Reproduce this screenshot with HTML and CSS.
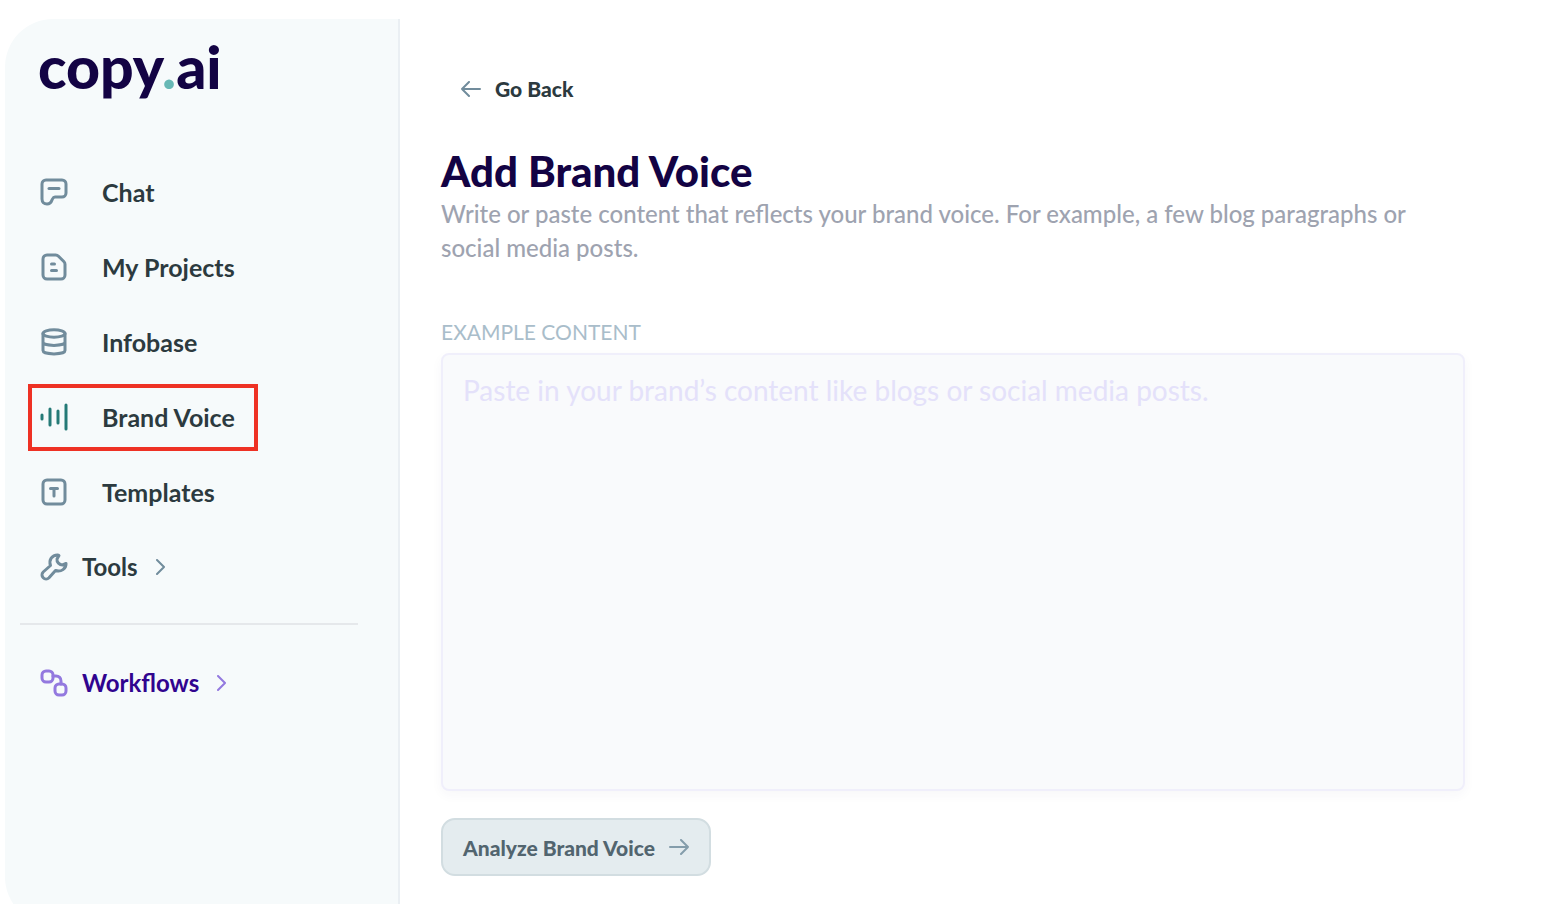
FILE: index.html
```html
<!DOCTYPE html>
<html lang="en">
<head>
  <meta charset="UTF-8">
  <meta name="viewport" content="width=device-width, initial-scale=1.0">
  <title>Add Brand Voice | copy.ai</title>
  <link rel="stylesheet" href="styles.css">
</head>
<body>
  <aside class="sidebar">
    <a class="logo" href="#">copy<span class="logo-dot">.</span>ai</a>

    <nav>
      <a class="nav-item" href="#">
        <svg class="icon" viewBox="0 0 28 28"><path d="M6 2h16a4 4 0 0 1 4 4v9a4 4 0 0 1-4 4h-7c-2 0-2 1-3 3-1 3-2.500 4-5 4-3 0-5-2-5-5V6a4 4 0 0 1 4-4z"/><path d="M9 10.500h10"/></svg>
        <span>Chat</span>
      </a>
      <a class="nav-item" href="#">
        <svg class="icon" viewBox="0 0 28 28"><path d="M7 2h8.500a4 4 0 0 1 3 1.200L23.800 8.500a4 4 0 0 1 1.200 3V22a4 4 0 0 1-4 4H7a4 4 0 0 1-4-4V6a4 4 0 0 1 4-4z"/><path d="M11.500 11h3M11.500 17.500h5"/></svg>
        <span>My Projects</span>
      </a>
      <a class="nav-item" href="#">
        <svg class="icon" viewBox="0 0 28 28"><ellipse cx="14" cy="5.500" rx="11" ry="3.700"/><path d="M3 5.500v17c0 4.500 22 4.500 22 0v-17M3 14c0 4.500 22 4.500 22 0"/></svg>
        <span>Infobase</span>
      </a>
      <a class="nav-item active" href="#">
        <svg class="icon" viewBox="0 0 28 28"><path d="M2 12v4M10 6v16M18 8v12M26 2v24"/></svg>
        <span>Brand Voice</span>
      </a>
      <a class="nav-item" href="#">
        <svg class="icon" viewBox="0 0 28 28"><rect x="3" y="2" width="22" height="24" rx="4"/><path d="M10.500 10.500h7M14 10.500v7.500"/></svg>
        <span>Templates</span>
      </a>
      <a class="nav-item group" href="#">
        <svg class="icon" viewBox="0 0 28 28"><path d="M17.500 2C12 2 8.500 7 10.500 12.500L3.200 19a4 4 0 0 0 5.800 5.800L15.500 17.500C21 19.500 26.500 15.500 26 10.500L22.500 12C19.500 12 16.500 9 17 6L19 2.500z"/></svg>
        <span>Tools</span>
        <svg class="chevron" viewBox="0 0 10 16"><path d="M1 1l7 7-7 7"/></svg>
      </a>
    </nav>

    <hr>

    <nav>
      <a class="nav-item group workflows" href="#">
        <svg class="icon" viewBox="0 0 28 28"><rect x="2" y="2" width="11" height="11" rx="4"/><rect x="15" y="15" width="11" height="11" rx="4"/><path d="M13 7h3c3 0 5 2 5 5v3"/></svg>
        <span>Workflows</span>
        <svg class="chevron" viewBox="0 0 10 16"><path d="M1 1l7 7-7 7"/></svg>
      </a>
    </nav>
  </aside>

  <main>
    <a class="back" href="#">
      <svg class="arrow" viewBox="0 0 20 16"><path d="M19 8H1M8 1L1 8l7 7"/></svg>
      Go Back
    </a>

    <h1>Add Brand Voice</h1>
    <p class="intro">Write or paste content that reflects your brand voice. For example, a few blog paragraphs or social media posts.</p>

    <form>
      <label for="content">EXAMPLE CONTENT</label>
      <textarea id="content" placeholder="Paste in your brand’s content like blogs or social media posts."></textarea>
      <button type="submit">
        Analyze Brand Voice
        <svg class="arrow" viewBox="0 0 20 16"><path d="M1 8h18M12 1l7 7-7 7"/></svg>
      </button>
    </form>
  </main>
</body>
</html>
```
FILE: styles.css
```css
:root {
  --sidebar-bg: #f6fafb;
  --navy: #130344;
  --text: #2c3a3f;
  --slate: #718c9c;
  --muted: #9ea3b0;
  --teal: #247a77;
  --purple: #9379df;
}

* {
  margin: 0;
  padding: 0;
  box-sizing: border-box;
}

body {
  font-family: Lato, 'Liberation Sans', sans-serif;
  background: #fff;
  color: var(--text);
  height: 100vh;
  display: flex;
  align-items: flex-start;
  overflow: hidden;
}

a {
  color: inherit;
  text-decoration: none;
}

svg {
  flex: none;
  fill: none;
  stroke: var(--slate);
  stroke-linecap: round;
  stroke-linejoin: round;
}

.sidebar {
  flex: none;
  width: 395px;
  height: calc(100vh + 2px);
  margin: 19px 0 0 5px;
  background: var(--sidebar-bg);
  border-right: 2px solid #eaeff3;
  border-radius: 48px 0 0 48px;
}

.logo {
  display: block;
  height: 140px;
  padding: 16px 0 0 33px;
  font-size: 59px;
  line-height: 64px;
  font-weight: 900;
  color: var(--navy);
}

.logo-dot {
  color: #67b8b5;
}

.nav-item {
  display: flex;
  align-items: center;
  gap: 34px;
  width: 230px;
  height: 67px;
  margin: 0 0 8px 23px;
  padding: 0 8px 2px;
  border: 4px solid transparent;
  font-size: 25px;
  font-weight: 700;
}

.nav-item.active {
  border-color: #ee3124;
}

.nav-item.active .icon {
  stroke: var(--teal);
}

.nav-item.group {
  gap: 14px;
  font-size: 24px;
}

.icon {
  width: 28px;
  height: 28px;
  stroke-width: 3;
}

.chevron {
  width: 10px;
  height: 16px;
  margin-left: 4px;
  stroke-width: 2;
}

hr {
  margin: 22px 40px 25px 15px;
  border: 0;
  border-top: 2px solid #e5e8eb;
}

.workflows {
  color: #30048f;
}

.workflows svg {
  stroke: var(--purple);
}

main {
  flex: 1;
  padding: 72px 85px 0 41px;
}

.back {
  display: flex;
  align-items: center;
  gap: 14px;
  margin-left: 20px;
  font-size: 21px;
  line-height: 34px;
  font-weight: 900;
}

.arrow {
  width: 20px;
  height: 16px;
  stroke-width: 2;
}

h1 {
  margin-top: 39px;
  font-size: 42px;
  line-height: 52px;
  font-weight: 900;
  color: var(--navy);
}

.intro {
  font-size: 24px;
  line-height: 34px;
  font-weight: 500;
  color: var(--muted);
}

label {
  display: block;
  margin-top: 53px;
  font-size: 21px;
  line-height: 28px;
  color: #a9bdca;
}

textarea {
  display: block;
  width: 100%;
  height: 438px;
  margin-top: 7px;
  padding: 18px 20px;
  border: 2px solid #f0effb;
  border-radius: 8px;
  background: #f9fafc;
  box-shadow: 0 4px 12px rgba(40, 60, 90, 0.04);
  font-family: inherit;
  font-size: 28px;
  line-height: 34px;
  color: var(--text);
  resize: none;
}

textarea::placeholder {
  color: #e4e1fa;
}

button {
  display: flex;
  align-items: center;
  gap: 14px;
  height: 58px;
  margin-top: 27px;
  padding: 0 20px;
  border: 2px solid #d2dde1;
  border-radius: 14px;
  background: #e4ecef;
  font-family: inherit;
  font-size: 21px;
  font-weight: 900;
  color: #52656f;
}

button .arrow {
  stroke: #849dab;
}
```
